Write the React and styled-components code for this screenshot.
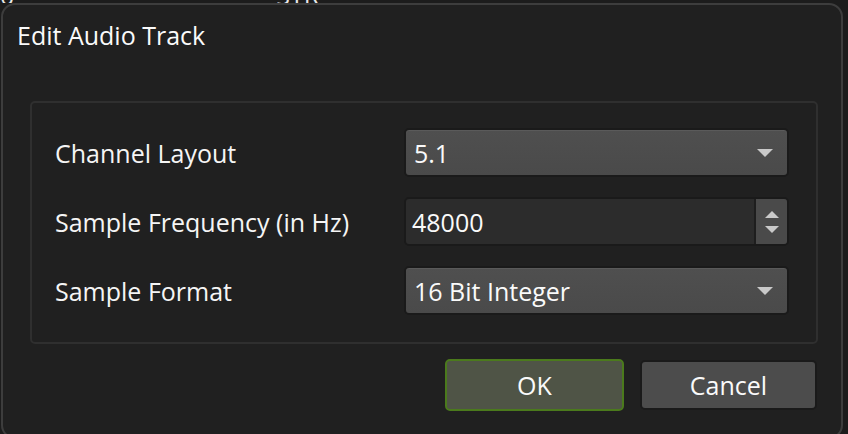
import styled, { createGlobalStyle } from 'styled-components';

const GlobalStyle = createGlobalStyle`
    html, body {
        margin: 0;
        padding: 0;
        background: #1c1c1c;
        overflow: hidden;
    }
    body {
        font-family: "Open Sans", "Noto Sans", sans-serif;
        color: #fff;
    }
`;

const fields = [
    { id: 'layout', label: 'Channel Layout', value: '5.1', kind: 'combo' },
    { id: 'freq', label: 'Sample Frequency (in Hz)', value: '48000', kind: 'spin' },
    { id: 'format', label: 'Sample Format', value: '16 Bit Integer', kind: 'combo' },
];

const Triangle = ({ up }) => (
    <svg width="16" height="8" viewBox="0 0 16 8">
        <polygon points={up ? '0,8 16,8 8,0' : '0,0 16,0 8,8'} fill="#c9c9c9" />
    </svg>
);

const App = () => {
    return (
        <Page>
            <GlobalStyle />
            <Backdrop>
                <span>0</span>
                <span>STR</span>
            </Backdrop>
            <Dialog>
                <Title>Edit Audio Track</Title>
                <Group>
                    {fields.map(({ id, label, value, kind }) => (
                        <Row key={id}>
                            <Label>{label}</Label>
                            {kind === 'combo' ? (
                                <Combo>
                                    <Value>{value}</Value>
                                    <Triangle />
                                </Combo>
                            ) : (
                                <Spin>
                                    <Value>{value}</Value>
                                    <Spinner>
                                        <Triangle up />
                                        <Triangle />
                                    </Spinner>
                                </Spin>
                            )}
                        </Row>
                    ))}
                </Group>
                <Buttons>
                    <Button primary>OK</Button>
                    <Button>Cancel</Button>
                </Buttons>
            </Dialog>
        </Page>
    );
};

export default App;

const Page = styled.div`
    width: 848px;
    height: 434px;
    overflow: hidden;
`;

const Backdrop = styled.div`
    height: 3px;
    overflow: hidden;
    display: flex;
    gap: 262px;
    font-size: 25px;
    line-height: 24px;
    color: #e8e8e8;

    span {
        margin-top: -17px;
    }
`;

const Dialog = styled.div`
    margin-left: 1px;
    width: 842px;
    height: 436px;
    box-sizing: border-box;
    border: 2px solid #3d3d3d;
    border-radius: 14px;
    background: #202020;
    display: flex;
    flex-direction: column;
`;

const Title = styled.div`
    margin: 14px 0 0 14px;
    font-size: 25px;
    line-height: 32px;
    color: #fafafa;
`;

const Group = styled.div`
    margin: 50px 23px 0 27px;
    padding: 25px 27px 27px 23px;
    border: 2px solid #2f2f2f;
    border-radius: 5px;
    display: flex;
    flex-direction: column;
    gap: 20px;
`;

const Row = styled.div`
    display: flex;
    align-items: center;
`;

const Label = styled.div`
    width: 349px;
    flex-shrink: 0;
    font-size: 25px;
    line-height: 32px;
    color: #f5f5f5;
`;

const Field = styled.div`
    flex: 1;
    height: 49px;
    box-sizing: border-box;
    border: 2px solid #1a1a1a;
    border-radius: 5px;
    display: flex;
    align-items: center;
`;

const Combo = styled(Field)`
    background: linear-gradient(#4f4f4f, #4a4a4a);
    box-shadow: inset 0 1px 0 #5a5a5a;
    padding: 0 14px 0 8px;
    justify-content: space-between;
`;

const Spin = styled(Field)`
    background: #2c2c2c;
    padding-left: 6px;
    overflow: hidden;
`;

const Value = styled.span`
    font-size: 25px;
    line-height: 32px;
    color: #fafafa;
    flex: 1;
`;

const Spinner = styled.div`
    width: 31px;
    height: 100%;
    background: #4a4a4a;
    border-left: 2px solid #1e1e1e;
    display: flex;
    flex-direction: column;
    align-items: center;
    justify-content: center;
    gap: 8px;

    svg {
        width: 14px;
        height: 7px;
    }
`;

const Buttons = styled.div`
    margin: 15px 24px 0 0;
    display: flex;
    justify-content: flex-end;
    gap: 16px;
`;

const Button = styled.button`
    width: ${({ primary }) => (primary ? '179px' : '177px')};
    height: ${({ primary }) => (primary ? '52px' : '50px')};
    margin-top: ${({ primary }) => (primary ? '0' : '1px')};
    box-sizing: border-box;
    border-radius: 5px;
    border: 2px solid ${({ primary }) => (primary ? '#4b7a1c' : '#1a1a1a')};
    background: ${({ primary }) => (primary ? '#4f5446' : '#4c4c4c')};
    color: #fafafa;
    font-family: inherit;
    font-size: 25px;
    cursor: pointer;
`;
